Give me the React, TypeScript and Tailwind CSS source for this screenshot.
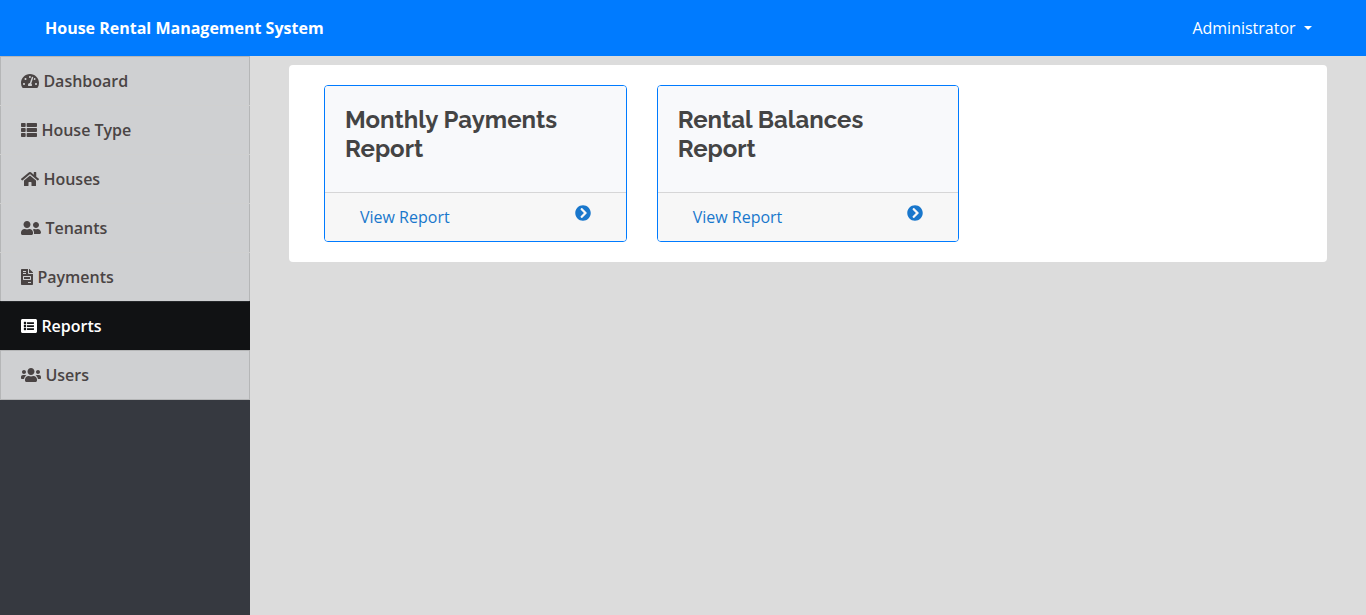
import {
  FaTachometerAlt,
  FaThList,
  FaHome,
  FaUserFriends,
  FaFileInvoice,
  FaListAlt,
  FaUsers,
  FaChevronCircleRight,
} from "react-icons/fa";
import type { IconType } from "react-icons";

type NavItem = { label: string; icon: IconType; width: string; active?: boolean };

const navItems: NavItem[] = [
  { label: "Dashboard", icon: FaTachometerAlt, width: "w-[18px]" },
  { label: "House Type", icon: FaThList, width: "w-4" },
  { label: "Houses", icon: FaHome, width: "w-[18px]" },
  { label: "Tenants", icon: FaUserFriends, width: "w-5" },
  { label: "Payments", icon: FaFileInvoice, width: "w-3" },
  { label: "Reports", icon: FaListAlt, width: "w-4", active: true },
  { label: "Users", icon: FaUsers, width: "w-5" },
];

const reports = [
  { lines: ["Monthly Payments", "Report"] },
  { lines: ["Rental Balances", "Report"] },
];

function Sidebar() {
  return (
    <nav className="w-[250px] shrink-0 bg-[#363940]">
      {navItems.map(({ label, icon: Icon, width, active }) => (
        <a
          key={label}
          href="#"
          className={
            active
              ? "-mb-px flex h-[50px] items-center gap-[4.4px] border border-[#111214] border-t-[#26282b] border-b-[#363940] bg-[#111214] px-5 font-semibold text-white"
              : "-mb-px flex h-[50px] items-center gap-[4.4px] border border-black/[.125] bg-white/[.766] px-5 font-semibold text-[#4a4444]"
          }
        >
          <Icon className={`${width} h-4 shrink-0`} />
          <span>{label}</span>
        </a>
      ))}
    </nav>
  );
}

function ReportCard({ lines }: { lines: string[] }) {
  return (
    <div className="overflow-hidden rounded-[4px] border border-[#007bff] bg-[#f8f9fa]">
      <div className="h-[105.6px] bg-[#f8f9fb] p-5">
        <h4 className="font-['Raleway','Lato',sans-serif] text-2xl leading-[28.8px] font-bold text-[#444444]">
          {lines.map((line) => (
            <span key={line} className="block whitespace-nowrap">
              {line}
            </span>
          ))}
        </h4>
      </div>
      <div className="flex h-[49px] items-start justify-between border-t border-[#d6d6d7] bg-[#f7f7f7] px-[35px] pt-3 text-[#1977cc]">
        <a href="#" className="leading-6">
          View Report
        </a>
        <FaChevronCircleRight className="h-4 w-4" />
      </div>
    </div>
  );
}

export default function App() {
  return (
    <div className="flex h-[615px] w-full flex-col overflow-hidden bg-[#dcdcdc] font-['Open_Sans',sans-serif] text-base">
      <header className="flex h-14 shrink-0 items-center justify-between bg-[#007bff] pr-[54px] pl-[45px] text-white">
        <b className="font-bold">House Rental Management System</b>
        <a href="#" className="flex items-center gap-[8.4px]">
          Administrator
          <span className="border-x-[4.8px] border-t-[4.8px] border-x-transparent border-t-white" />
        </a>
      </header>
      <div className="flex min-h-0 flex-1">
        <Sidebar />
        <main className="flex-1 pt-[9px] pr-[39px] pl-[39px]">
          <section className="rounded-[4px] bg-white px-[35px] pt-5 pb-[20.4px]">
            <div className="grid grid-cols-3 gap-[30px]">
              {reports.map((report) => (
                <ReportCard key={report.lines[0]} {...report} />
              ))}
            </div>
          </section>
        </main>
      </div>
    </div>
  );
}
